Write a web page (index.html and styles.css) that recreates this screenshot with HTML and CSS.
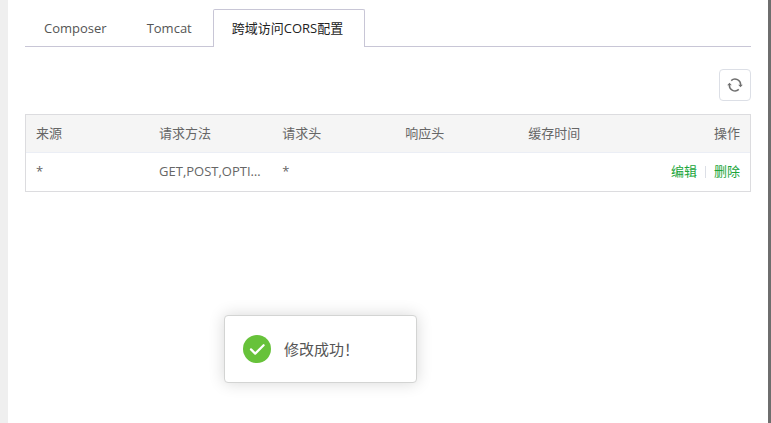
FILE: index.html
```html
<!DOCTYPE html>
<html lang="zh-CN">
<head>
<meta charset="utf-8">
<title>跨域访问CORS配置</title>
<link rel="stylesheet" href="styles.css">
</head>
<body>
<main class="panel">
  <nav class="tabs">
    <a class="tab" href="#composer">Composer</a>
    <a class="tab" href="#tomcat">Tomcat</a>
    <a class="tab tab-active" href="#cors" aria-current="page">跨域访问CORS配置</a>
  </nav>
  <div class="toolbar">
    <button class="refresh" type="button" aria-label="刷新">
      <svg width="16" height="14" viewBox="0 0 16 14" fill="none" stroke="#707070" stroke-width="1.5">
        <path d="M4.2 2.6A5.6 5.6 0 0 1 13.6 7.2M11.8 11.4A5.6 5.6 0 0 1 2.4 6.8"/>
        <path d="M11.2 6.8h4.6L13.5 9.2zM.2 7.2h4.6L2.5 4.8z" fill="#707070" stroke="none"/>
      </svg>
    </button>
  </div>
  <table class="rules">
    <thead>
      <tr><th>来源</th><th>请求方法</th><th>请求头</th><th>响应头</th><th>缓存时间</th><th class="actions">操作</th></tr>
    </thead>
    <tbody>
      <tr>
        <td>*</td><td>GET,POST,OPTIONS</td><td>*</td><td></td><td></td>
        <td class="actions"><a href="#edit">编辑</a><span class="divider"></span><a href="#delete">删除</a></td>
      </tr>
    </tbody>
  </table>
</main>
<div class="toast" role="status">
  <svg width="28" height="28" viewBox="0 0 28 28" fill="none">
    <circle cx="14" cy="14" r="14" fill="#67c23a"/>
    <path d="M8 14.4l4.2 4.2L20.6 10.2" stroke="#fff" stroke-width="2.2" stroke-linecap="round" stroke-linejoin="round"/>
  </svg>
  <span>修改成功！</span>
</div>
</body>
</html>
```
FILE: styles.css
```css
* {
  box-sizing: border-box;
}

body {
  margin: 0;
  min-height: 100vh;
  display: flex;
  background: #fff;
  border-left: 8px solid #efefef;
  border-right: 3px solid #6e6e6e;
  color: #666;
  font: 13px/20px "Open Sans", "Noto Sans CJK SC", sans-serif;
}

a {
  text-decoration: none;
}

.panel {
  flex: 1;
  min-width: 0;
  padding: 9px 17px;
}

.tabs {
  display: flex;
  border-bottom: 1px solid #c8c6d6;
}

.tab {
  margin-bottom: -1px;
  padding: 8px 20px 9px 18px;
  border: 1px solid transparent;
  border-bottom: 0;
  color: #555;
}

.tab-active {
  padding-right: 21px;
  border-color: #c8c6d6;
  border-radius: 2px 2px 0 0;
  background: #fff;
  color: #222;
}

.toolbar {
  display: flex;
  justify-content: flex-end;
  padding: 22px 0 13px;
}

.refresh {
  display: flex;
  align-items: center;
  justify-content: center;
  width: 32px;
  height: 32px;
  padding: 0;
  border: 1px solid #dcdfe6;
  border-radius: 4px;
  background: #fff;
}

.rules {
  width: 100%;
  table-layout: fixed;
  border-collapse: separate;
  border-spacing: 0;
  border: 1px solid #dcdcdf;
}

.rules th,
.rules td {
  height: 38px;
  padding: 0 10px 2px;
  overflow: hidden;
  text-align: left;
  text-overflow: ellipsis;
  white-space: nowrap;
  font-weight: 400;
}

.rules th {
  border-bottom: 1px solid #ebeef5;
  background: #f5f5f5;
}

.rules th:nth-child(-n+5) {
  width: 17%;
}

.rules .actions {
  text-align: right;
}

.actions a {
  color: #20a53a;
}

.divider {
  display: inline-block;
  width: 1px;
  height: 12px;
  margin: 0 8px;
  background: #dcdfe6;
  vertical-align: -2px;
}

.toast {
  position: absolute;
  top: 315px;
  left: 224px;
  display: flex;
  align-items: center;
  gap: 13px;
  width: 193px;
  padding: 19px 18px;
  border: 1px solid #d3d4d3;
  border-radius: 4px;
  background: #fff;
  box-shadow: 0 0 16px rgba(0, 0, 0, 0.16);
  color: #555;
  font-size: 15px;
}
```
